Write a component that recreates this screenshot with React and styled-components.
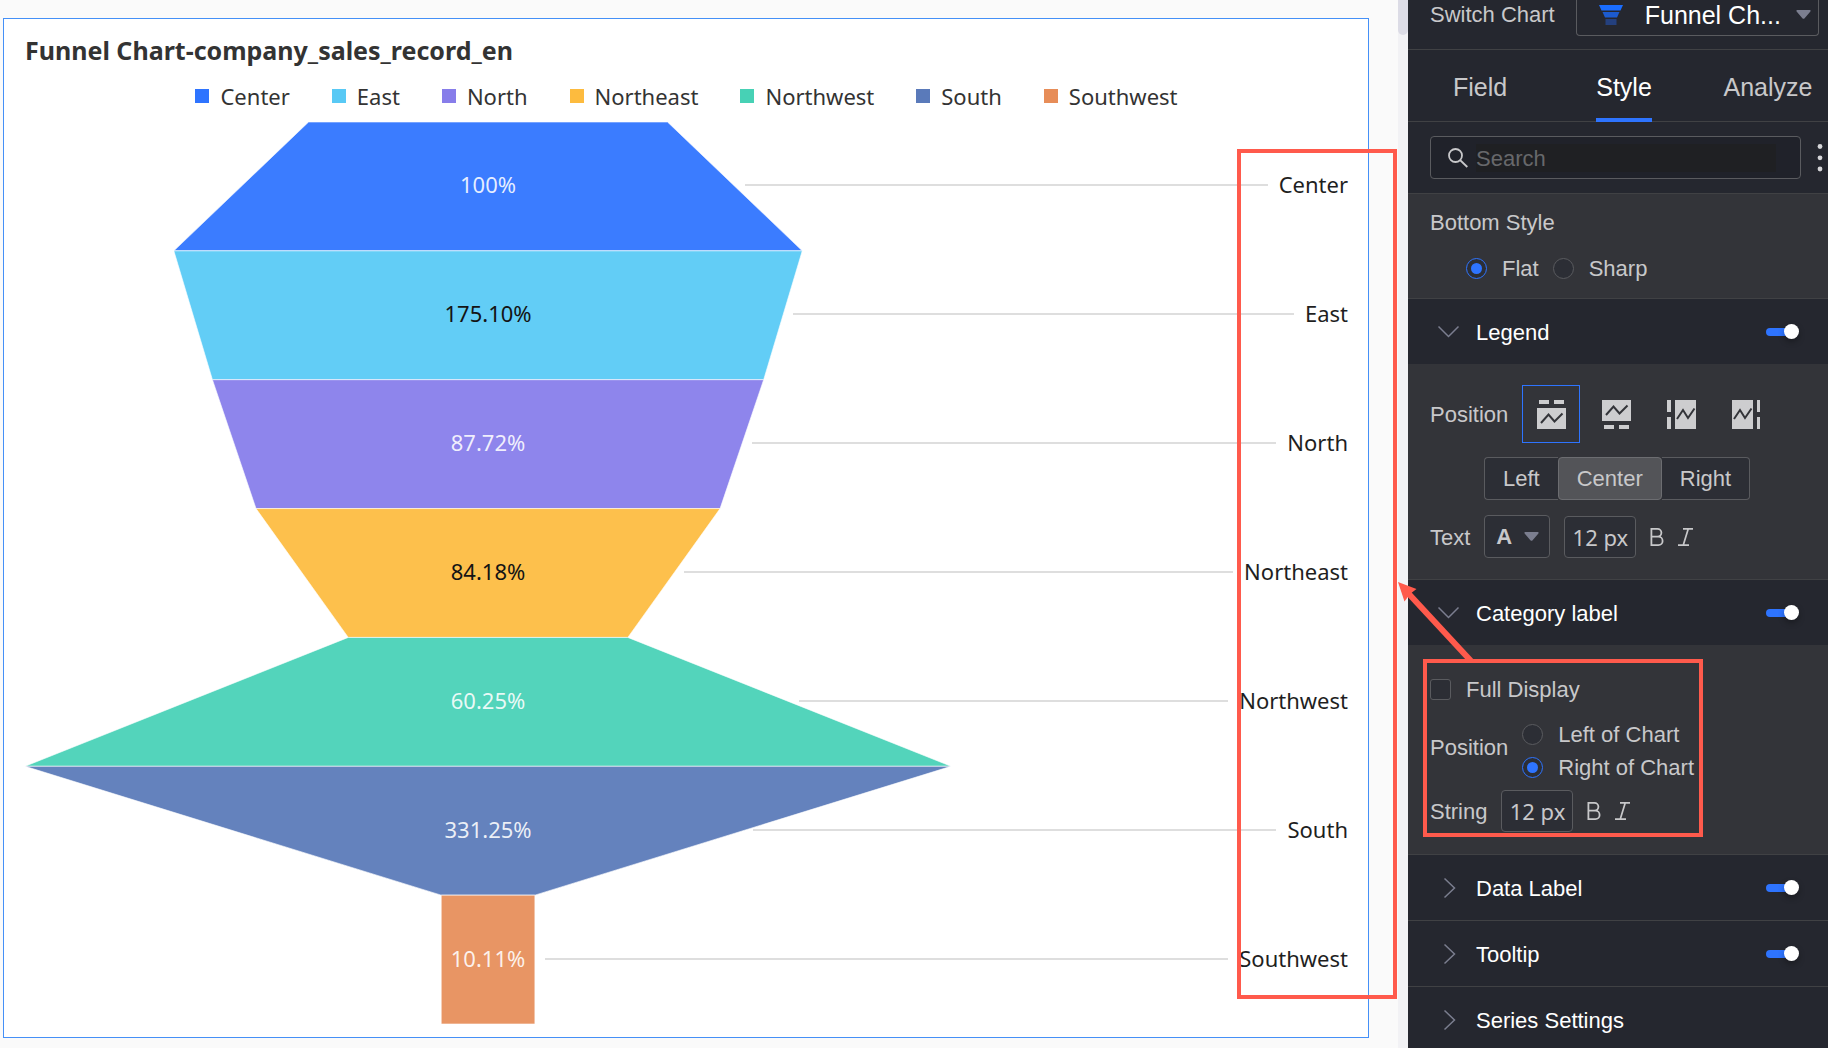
import React, { useState } from "react";
import styled, { createGlobalStyle, css } from "styled-components";

const color = {
  accent: "#2e74ff",
  callout: "#ff5a4c",
  panel: "#25272f",
  panelBody: "#333439",
  line: "#404144",
  control: "#2c2e35",
  controlLine: "#5a5b5f",
  text: "#c8c8ca",
  muted: "#7b7e8f",
};

const chartFont = '"Noto Sans", "Open Sans", sans-serif';
const uiFont = '"Liberation Sans", Arial, sans-serif';

const GlobalStyle = createGlobalStyle`
  *, *::before, *::after { box-sizing: border-box; }
  body { margin: 0; background: #fafafa; font-family: ${uiFont}; }
  button, input, select { margin: 0; padding: 0; font: inherit; color: inherit; }
  h1, h2, ul { margin: 0; padding: 0; font: inherit; list-style: none; }
`;

/* ---------- page ---------- */

const Page = styled.div`
  position: relative;
  display: flex;
  height: 100vh;
  overflow: hidden;
`;

const Canvas = styled.main`
  flex: 1;
  min-width: 0;
  display: flex;
  padding: 18px 29px 10px 3px;
`;

const ScrollTrack = styled.div`
  width: 10px;
  background: #f2f2f5;
`;

const ScrollThumb = styled.div`
  height: 35px;
  border-radius: 0 0 5px 5px;
  background: #dcdce6;
`;

/* ---------- chart card ---------- */

const Card = styled.section`
  flex: 1;
  min-width: 0;
  display: flex;
  flex-direction: column;
  padding: 15px 20px 13px 21px;
  border: 1px solid #4590f7;
  background: #fff;
  font-family: ${chartFont};
`;

const ChartTitle = styled.h1`
  font-size: 25px;
  line-height: 32px;
  font-weight: 700;
  color: #333;
`;

const LegendList = styled.ul`
  display: flex;
  justify-content: center;
  gap: 42px;
  margin: 16px 0 12px;
  font-size: 22px;
  line-height: 28px;
  color: #333;
`;

const LegendItem = styled.li`
  display: flex;
  align-items: center;
  gap: 11px;
`;

const Swatch = styled.span`
  width: 14px;
  height: 14px;
  background: ${(p) => p.$fill};
`;

const Plot = styled.div`
  flex: 1;
  min-height: 0;
  display: grid;
  grid-template: minmax(0, 1fr) / minmax(0, 7fr) minmax(0, 3fr);
  font-size: 22px;
  line-height: 28px;
`;

const FunnelShape = styled.svg`
  grid-area: 1 / 1;
  width: 100%;
  height: 100%;
`;

const ValueColumn = styled.ul`
  grid-area: 1 / 1;
  display: grid;
  grid-auto-rows: 1fr;
`;

const Value = styled.li`
  display: grid;
  place-items: center;
  padding-bottom: 4px;
  color: ${(p) => (p.$dark ? "#141414" : "rgba(255, 255, 255, 0.88)")};
`;

const CategoryRows = styled.ul`
  grid-area: 1 / 1 / 2 / 3;
  display: grid;
  grid-auto-rows: 1fr;
`;

const CategoryRow = styled.li`
  display: flex;
  align-items: center;
  gap: 11px;
  padding-bottom: 2px;
  color: #1f1f1f;
`;

const CategoryName = styled.span`
  padding-bottom: 2px;
`;

const Leader = styled.span`
  flex: 1;
  height: 2px;
  margin-left: 10px;
  background: #dedede;
`;

/* ---------- settings panel ---------- */

const Panel = styled.aside`
  flex: none;
  width: 420px;
  overflow: hidden;
  background: ${color.panel};
  color: ${color.text};
  font-size: 22px;
  line-height: 26px;
`;

const SwitchBar = styled.div`
  display: flex;
  align-items: flex-start;
  gap: 21px;
  height: 50px;
  padding: 0 9px 0 22px;
  border-bottom: 1px solid ${color.line};
`;

const SwitchLabel = styled.label`
  padding-top: 2px;
`;

const ChartSelect = styled.div`
  flex: 1;
  min-width: 0;
  display: flex;
  align-items: center;
  height: 36px;
  padding: 0 7px 6px 22px;
  border: 1px solid ${color.controlLine};
  border-top: 0;
  border-radius: 0 0 4px 4px;
  color: #fff;
`;

const PlainSelect = styled.select`
  flex: 1;
  min-width: 0;
  border: 0;
  outline: 0;
  appearance: none;
  background: transparent;
  font-size: ${(p) => (p.$large ? 25 : 22)}px;
  font-weight: ${(p) => (p.$bold ? 700 : 400)};
`;

const SelectIcon = styled.svg`
  flex: none;
  width: 24px;
  height: 20px;
  margin-right: 22px;
`;

const Caret = styled.svg`
  flex: none;
  width: 15px;
  height: 9px;
  fill: ${color.muted};
`;

const TabBar = styled.div`
  display: grid;
  grid-template-columns: repeat(3, 144px);
  justify-items: center;
  height: 72px;
  box-shadow: inset 0 -1px ${color.line};
`;

const Tab = styled.button`
  padding-top: 6px;
  border: 0;
  border-bottom: 4px solid ${(p) => (p.$active ? color.accent : "transparent")};
  background: none;
  color: ${(p) => (p.$active ? "#fff" : color.text)};
  font-size: 25px;
`;

const SearchBar = styled.div`
  display: flex;
  align-items: center;
  gap: 16px;
  height: 72px;
  padding: 0 5px 0 22px;
  border-bottom: 1px solid ${color.line};
`;

const SearchBox = styled.label`
  flex: 1;
  min-width: 0;
  display: flex;
  align-items: center;
  gap: 8px;
  height: 43px;
  padding: 0 24px 0 17px;
  border: 1px solid ${color.controlLine};
  border-radius: 4px;
  background: #20222a;
`;

const SearchGlyph = styled.svg`
  flex: none;
  width: 20px;
  height: 20px;
  fill: none;
  stroke: ${color.text};
`;

const SearchInput = styled.input`
  flex: 1;
  min-width: 0;
  height: 28px;
  padding-top: 2px;
  border: 0;
  outline: 0;
  background: #1f2023;
  &::placeholder { color: #67686b; }
`;

const MoreButton = styled.button`
  display: grid;
  border: 0;
  background: none;
`;

const Body = styled.div`
  padding: ${(p) => p.$pad};
  background: ${color.panelBody};
`;

const Row = styled.div`
  display: flex;
  align-items: center;
  gap: 14px;
  margin-top: ${(p) => p.$top || 0}px;
  padding-left: ${(p) => p.$indent || 0}px;
`;

const Caption = styled.span`
  padding-top: 2px;
  line-height: 24px;
`;

const Stack = styled.div`
  display: grid;
  gap: 7px;
  padding-top: 8px;
`;

const Choice = styled.label`
  display: flex;
  align-items: center;
  gap: 15px;
`;

const Radio = styled.input.attrs({ type: "radio" })`
  appearance: none;
  display: grid;
  place-content: center;
  width: 21px;
  height: 21px;
  border: 1px solid ${color.controlLine};
  border-radius: 50%;
  background: ${color.control};
  &:checked { border-color: ${color.accent}; }
  &:checked::before {
    content: "";
    width: 11px;
    height: 11px;
    border-radius: 50%;
    background: ${color.accent};
  }
`;

const Check = styled.input.attrs({ type: "checkbox" })`
  appearance: none;
  width: 21px;
  height: 21px;
  border: 1px solid ${color.controlLine};
  border-radius: 3px;
  background: ${color.control};
  &:checked { background: ${color.accent}; }
`;

const SectionHead = styled.div`
  display: flex;
  align-items: center;
  height: 66px;
  padding: 0 29px 0 27px;
  border-top: 1px solid ${color.line};
`;

const SectionButton = styled.button`
  flex: 1;
  display: flex;
  align-items: center;
  gap: 14px;
  border: 0;
  background: none;
  color: #fff;
  text-align: left;
`;

const Chevron = styled.svg`
  width: 27px;
  height: 26px;
  fill: none;
  stroke: ${color.muted};
  stroke-width: 1.5;
`;

const Toggle = styled.input.attrs({ type: "checkbox", role: "switch" })`
  appearance: none;
  position: relative;
  width: 33px;
  height: 16px;
  &::before {
    content: "";
    position: absolute;
    inset: 4px 4px 4px 0;
    border-radius: 4px;
    background: ${(p) => (p.checked ? color.accent : "#55565c")};
  }
  &::after {
    content: "";
    position: absolute;
    top: 0;
    ${(p) => (p.checked ? "right: 0;" : "left: 0;")}
    width: 15px;
    height: 15px;
    border-radius: 50%;
    background: #fff;
    box-shadow: 0 3px 6px rgba(0, 0, 0, 0.3);
  }
`;

const PlacementGroup = styled.div`
  display: flex;
  gap: 7px;
`;

const PlacementButton = styled.button`
  display: grid;
  place-items: center;
  width: 58px;
  height: 58px;
  border: 1px solid ${(p) => (p.$active ? color.accent : "transparent")};
  background: none;
`;

const Segments = styled.div`
  display: flex;
`;

const Segment = styled.button`
  height: 43px;
  padding: 0 18px;
  border: 1px solid ${color.controlLine};
  background: ${color.control};
  &:first-child { border-right: 0; border-radius: 4px 0 0 4px; }
  &:last-child { border-left: 0; border-radius: 0 4px 4px 0; }
  ${(p) =>
    p.$active &&
    css`
      border-color: #6c6d71;
      border-radius: 4px;
      background: #535458;
    `}
`;

const FontSelect = styled.div`
  display: flex;
  align-items: center;
  width: 66px;
  height: 43px;
  padding: 0 10px 0 11px;
  border: 1px solid ${color.controlLine};
  border-radius: 4px;
  background: ${color.control};
`;

const SizeInput = styled.input`
  width: 72px;
  height: 42px;
  border: 1px solid ${color.controlLine};
  border-radius: 4px;
  outline: 0;
  background: ${color.control};
  font-family: ${chartFont};
  text-align: center;
`;

const IconButton = styled.button`
  display: grid;
  border: 0;
  background: none;
`;

/* ---------- callouts ---------- */

const Callout = styled.div`
  position: absolute;
  top: ${(p) => p.$top}px;
  right: ${(p) => p.$right}px;
  width: ${(p) => p.$width}px;
  height: ${(p) => p.$height}px;
  border: 4px solid ${color.callout};
  pointer-events: none;
`;

const CalloutArrow = styled.svg`
  position: absolute;
  top: 580px;
  right: 352px;
  width: 80px;
  height: 84px;
  pointer-events: none;
`;

/* ---------- data ---------- */

const stages = [
  { name: "Center", rate: "100%", size: 100, fill: "#3b7cff", key: "#2e74ff" },
  { name: "East", rate: "175.10%", size: 175.1, fill: "#62cdf6", key: "#58c9f5", dark: true },
  { name: "North", rate: "87.72%", size: 153.6, fill: "#8e85ec", key: "#877dea" },
  { name: "Northeast", rate: "84.18%", size: 129.3, fill: "#fdc04c", key: "#fdbb3e", dark: true },
  { name: "Northwest", rate: "60.25%", size: 77.9, fill: "#53d4bb", key: "#47d1b5" },
  { name: "South", rate: "331.25%", size: 258.05, fill: "#6482bd", key: "#5a7aba" },
  { name: "Southwest", rate: "10.11%", size: 26.1, fill: "#e89564", key: "#e78d58" },
];
const widest = Math.max(...stages.map((s) => s.size));
const share = (i) => (stages[Math.min(i, stages.length - 1)].size / widest) * 100;
/* Where a stage's right edge crosses the middle of its band, in % of the plot. */
const leaderStart = (i) => (50 + (share(i) + share(i + 1)) / 4) * 0.7;

function Funnel() {
  return (
    <Plot>
      <FunnelShape viewBox="0 0 100 700" preserveAspectRatio="none" aria-hidden="true">
        {stages.map((s, i) => {
          const a = share(i) / 2;
          const b = share(i + 1) / 2;
          const y = i * 100;
          return (
            <polygon
              key={s.name}
              points={`${50 - a},${y} ${50 + a},${y} ${50 + b},${y + 100} ${50 - b},${y + 100}`}
              fill={s.fill}
              stroke="#fff"
              strokeOpacity="0.6"
              strokeWidth="1"
              vectorEffect="non-scaling-stroke"
            />
          );
        })}
      </FunnelShape>
      <CategoryRows>
        {stages.map((s, i) => (
          <CategoryRow key={s.name} style={{ paddingLeft: `${leaderStart(i)}%` }}>
            <Leader />
            <CategoryName>{s.name}</CategoryName>
          </CategoryRow>
        ))}
      </CategoryRows>
      <ValueColumn>
        {stages.map((s) => (
          <Value key={s.name} $dark={s.dark}>{s.rate}</Value>
        ))}
      </ValueColumn>
    </Plot>
  );
}

/* ---------- icons ---------- */

const DownCaret = () => (
  <Caret viewBox="0 0 15 9" aria-hidden="true">
    <path d="M1.2 0h12.6c.8 0 1.1.9.6 1.4L8.4 8.4a1.3 1.3 0 0 1-1.8 0L.6 1.4C.1.9.4 0 1.2 0z" />
  </Caret>
);

const BoldIcon = () => (
  <svg width="14" height="20" viewBox="0 0 14 20" fill="none" stroke={color.text} strokeWidth="1.8">
    <path d="M1.4 1.9h6.1a3.9 3.9 0 0 1 0 7.8H1.4zM1.4 9.7h7a4.2 4.2 0 0 1 0 8.4h-7z" />
  </svg>
);

const ItalicIcon = () => (
  <svg width="16" height="20" viewBox="0 0 16 20" fill="none" stroke={color.text} strokeWidth="1.7">
    <path d="M5 1.9H15M0 18.1H11M10.2 1.9L5.3 18.1" />
  </svg>
);

const placements = {
  top: (
    <>
      <path d="M2 0h10v4H2zM17 0h10v4H17zM0 8h29v21H0z" />
      <path d="M4 23l7.500-8.500 6 7 8-8" className="line" />
    </>
  ),
  bottom: (
    <>
      <path d="M0 0h29v21H0zM2 25h10v4H2zM17 25h10v4H17z" />
      <path d="M4 15l7.500-8.500 6 7 8-8" className="line" />
    </>
  ),
  left: (
    <>
      <path d="M0 0h4v12H0zM0 17h4v12H0zM8 0h21v29H8z" />
      <path d="M10 19l6-9 5 8 6.500-9.500" className="line" />
    </>
  ),
  right: (
    <>
      <path d="M0 0h21v29H0zM25 0h3v12h-3zM25 17h3v12h-3z" />
      <path d="M2 19l6-9 5 8 6.500-9.500" className="line" />
    </>
  ),
};

const PlacementIcon = styled.svg`
  width: 29px;
  height: 29px;
  fill: #cdcdcf;
  .line { fill: none; stroke: ${color.panelBody}; stroke-width: 2; }
`;

/* ---------- panel pieces ---------- */

function Section({ title, open, toggle = true, children }) {
  const [on, setOn] = useState(true);
  return (
    <section>
      <SectionHead>
        <SectionButton type="button" aria-expanded={!!open}>
          <Chevron viewBox="0 0 27 26" aria-hidden="true">
            <path d={open ? "M3.5 7.5L13.5 17.5L23.5 7.5" : "M9.5 3.5L19.5 13L9.5 22.5"} />
          </Chevron>
          <Caption>{title}</Caption>
        </SectionButton>
        {toggle && <Toggle aria-label={title} checked={on} onChange={() => setOn(!on)} />}
      </SectionHead>
      {children}
    </section>
  );
}

function TextStyleButtons() {
  return (
    <>
      <IconButton type="button" aria-label="Bold"><BoldIcon /></IconButton>
      <IconButton type="button" aria-label="Italic"><ItalicIcon /></IconButton>
    </>
  );
}

function Settings() {
  return (
    <Panel>
      <SwitchBar>
        <SwitchLabel htmlFor="chart-type">Switch Chart</SwitchLabel>
        <ChartSelect>
          <SelectIcon viewBox="0 0 24 20" aria-hidden="true">
            <path d="M0 0h24l-2.5 5.5h-19z" fill="#1a6dff" />
            <path d="M3.5 7h17l-2.5 5.5H6z" fill="#1c5bd0" />
            <path d="M6.500 14h11v6h-11z" fill="#24407e" />
          </SelectIcon>
          <PlainSelect id="chart-type" $large>
            <option>Funnel Ch...</option>
          </PlainSelect>
          <DownCaret />
        </ChartSelect>
      </SwitchBar>

      <TabBar role="tablist">
        <Tab type="button" role="tab">Field</Tab>
        <Tab type="button" role="tab" aria-selected="true" $active>Style</Tab>
        <Tab type="button" role="tab">Analyze</Tab>
      </TabBar>

      <SearchBar>
        <SearchBox>
          <SearchGlyph viewBox="0 0 20 20" strokeWidth="1.8" aria-hidden="true">
            <circle cx="7.5" cy="7.5" r="6.5" />
            <path d="M12 12l7.3 7" />
          </SearchGlyph>
          <SearchInput type="text" placeholder="Search" aria-label="Search" />
        </SearchBox>
        <MoreButton type="button" aria-label="More">
          <svg width="6" height="28" viewBox="0 0 6 28" fill="#d5d5d8">
            <circle cx="3" cy="2.5" r="2.4" />
            <circle cx="3" cy="13.8" r="2.4" />
            <circle cx="3" cy="25" r="2.4" />
          </svg>
        </MoreButton>
      </SearchBar>

      <Body $pad="15px 22px 17px">
        <Row><Caption>Bottom Style</Caption></Row>
        <Row $top={20} $indent={36}>
          <Choice><Radio name="bottom" defaultChecked /><Caption>Flat</Caption></Choice>
          <Choice><Radio name="bottom" /><Caption>Sharp</Caption></Choice>
        </Row>
      </Body>

      <Section title="Legend" open>
        <Body $pad="21px 22px">
          <Row>
            <Caption>Position</Caption>
            <PlacementGroup>
              {Object.keys(placements).map((side) => (
                <PlacementButton key={side} type="button" aria-label={side} $active={side === "top"}>
                  <PlacementIcon viewBox="0 0 29 29">{placements[side]}</PlacementIcon>
                </PlacementButton>
              ))}
            </PlacementGroup>
          </Row>
          <Row $top={14} $indent={54}>
            <Segments>
              <Segment type="button">Left</Segment>
              <Segment type="button" $active>Center</Segment>
              <Segment type="button">Right</Segment>
            </Segments>
          </Row>
          <Row $top={15}>
            <Caption as="label" htmlFor="legend-size">Text</Caption>
            <FontSelect>
              <PlainSelect aria-label="Text color" $bold>
                <option>A</option>
              </PlainSelect>
              <DownCaret />
            </FontSelect>
            <SizeInput id="legend-size" defaultValue="12 px" />
            <TextStyleButtons />
          </Row>
        </Body>
      </Section>

      <Section title="Category label" open>
        <Body $pad="31px 22px 22px">
          <Row>
            <Choice><Check /><Caption>Full Display</Caption></Choice>
          </Row>
          <Row $top={11}>
            <Caption>Position</Caption>
            <Stack>
              <Choice><Radio name="side" /><Caption>Left of Chart</Caption></Choice>
              <Choice><Radio name="side" defaultChecked /><Caption>Right of Chart</Caption></Choice>
            </Stack>
          </Row>
          <Row $top={10}>
            <Caption as="label" htmlFor="label-size">String</Caption>
            <SizeInput id="label-size" defaultValue="12 px" />
            <TextStyleButtons />
          </Row>
        </Body>
      </Section>

      <Section title="Data Label" />
      <Section title="Tooltip" />
      <Section title="Series Settings" toggle={false} />
    </Panel>
  );
}

export default function App() {
  return (
    <Page>
      <GlobalStyle />
      <Canvas>
        <Card>
          <ChartTitle>Funnel Chart-company_sales_record_en</ChartTitle>
          <LegendList>
            {stages.map((s) => (
              <LegendItem key={s.name}>
                <Swatch $fill={s.key} />
                {s.name}
              </LegendItem>
            ))}
          </LegendList>
          <Funnel />
        </Card>
      </Canvas>
      <ScrollTrack>
        <ScrollThumb />
      </ScrollTrack>
      <Settings />
      <Callout $top={149} $right={431} $width={160} $height={850} />
      <Callout $top={659} $right={125} $width={280} $height={178} />
      <CalloutArrow viewBox="0 0 80 84" aria-hidden="true">
        <path d="M12 13L75 81" stroke={color.callout} strokeWidth="6" />
        <path d="M2 2L20.5 9L14 14L8.500 21.500z" fill={color.callout} />
      </CalloutArrow>
    </Page>
  );
}
